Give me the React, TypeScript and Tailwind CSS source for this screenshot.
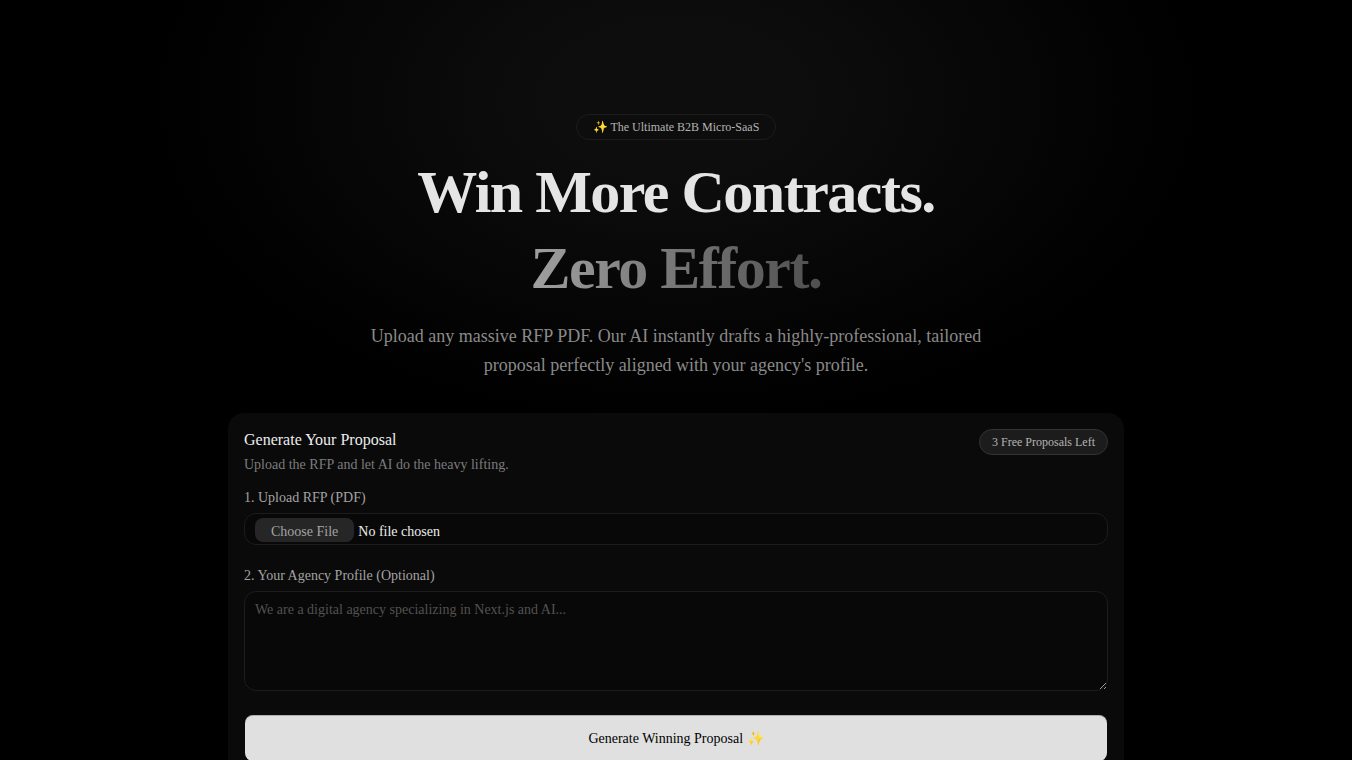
export default function App() {
  return (
    <div className="h-[760px] overflow-hidden bg-black font-['Liberation_Serif',serif] text-[#ededed]">
      <div className="min-h-screen bg-[radial-gradient(ellipse_520px_320px_at_50%_100px,#0d0d0d_25%,#000000_100%)] pt-[114px]">
        {/* Hero */}
        <div className="flex flex-col items-center text-center">
          <span className="flex h-[26px] items-center rounded-full border border-[#1c1c1c] bg-[#0d0d0d] px-4 text-xs leading-4 text-[#b4b4b4]">
            ✨ The Ultimate B2B Micro-SaaS
          </span>
          <h1 className="mt-[14px] text-6xl font-bold leading-[76px] tracking-[-1.5px] text-[#e5e5e5]">
            Win More Contracts.
            <br />
            <span className="bg-gradient-to-r from-[#a0a0a0] to-[#4f4f4f] bg-clip-text text-transparent">Zero Effort.</span>
          </h1>
          <p className="mt-4 w-[672px] text-lg leading-[29px] text-[#8a8a8a]">
            Upload any massive RFP PDF. Our AI instantly drafts a highly-professional, tailored proposal perfectly aligned with your agency's profile.
          </p>
        </div>

        {/* Form card */}
        <div className="mx-auto mt-[33px] w-[896px] rounded-2xl bg-[#0a0a0a] p-4">
          <div className="flex items-start justify-between">
            <div>
              <h2 className="mt-px text-base leading-5 text-[#ededed]">Generate Your Proposal</h2>
              <p className="mt-[5px] text-sm leading-5 text-[#7c7c7c]">Upload the RFP and let AI do the heavy lifting.</p>
            </div>
            <span className="flex h-[26px] items-center rounded-full border border-[#333333] bg-[#1c1c1c] px-3 text-xs text-[#b4b4b4]">
              3 Free Proposals Left
            </span>
          </div>

          <label className="mt-[13px] block text-sm leading-5 text-[#a3a3a3]">1. Upload RFP (PDF)</label>
          <input
            type="file"
            accept="application/pdf"
            className="mt-[5px] block h-8 w-full rounded-xl border border-[#1c1c1c] bg-[#080808] px-2.5 py-[4px] text-sm leading-5 text-[#ededed] file:mr-1 file:h-6 file:rounded-lg file:border-0 file:bg-[#262626] file:px-4 file:pt-[4px] file:text-sm file:text-[#a3a3a3]"
          />

          <label className="mt-[21px] block text-sm leading-5 text-[#a3a3a3]">2. Your Agency Profile (Optional)</label>
          <textarea
            placeholder="We are a digital agency specializing in Next.js and AI..."
            className="mt-[5px] block h-[100px] w-full rounded-xl border border-[#1c1c1c] bg-[#080808] px-2.5 py-2 text-sm leading-5 text-[#ededed] outline-none placeholder:text-[#525252]"
          />

          <button className="mx-px mt-6 h-[46px] w-[862px] rounded-lg border-t border-[#b0b0b0] bg-[#e0e0e0] text-sm text-black">
            Generate Winning Proposal ✨
          </button>
        </div>
      </div>
    </div>
  );
}
